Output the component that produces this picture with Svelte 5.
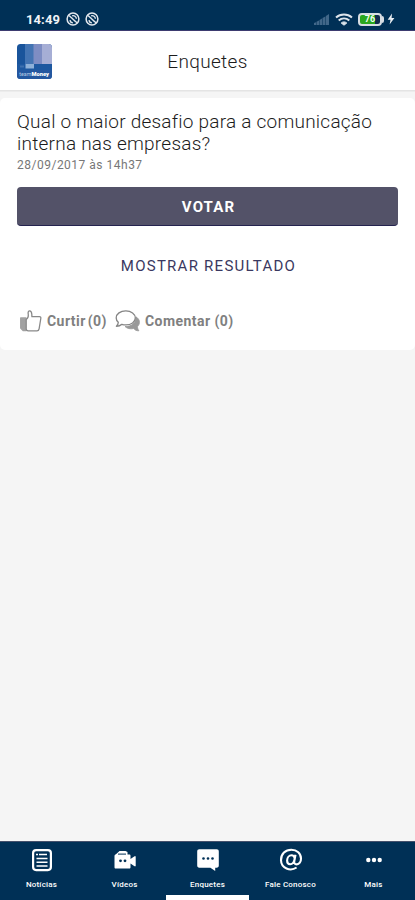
<script lang="ts">
  type Tab = { id: string; label: string };

  const tabs: Tab[] = [
    { id: "news", label: "Notícias" },
    { id: "videos", label: "Vídeos" },
    { id: "polls", label: "Enquetes" },
    { id: "contact", label: "Fale Conosco" },
    { id: "more", label: "Mais" },
  ];

  let active = $state("polls");
  let likes = $state(0);
  let comments = $state(0);
</script>

{#snippet notification()}
  <svg width="14" height="14" viewBox="0 0 14 14" fill="none" stroke="#e3e8ee">
    <circle cx="7" cy="7" r="5.9" stroke-width="1.5" />
    <path d="M3 3.6 11.2 11M4 8.2c.2 1.5 1.3 2.6 2.9 2.7M6.2 3.8c2-.5 4 .6 4.2 3M6 6.3l3.4 3.2" stroke-width="1.4" />
  </svg>
{/snippet}

<div class="screen">
  <div class="status">
    <span class="clock">14:49</span>
    {@render notification()}
    {@render notification()}
    <div class="status-right">
      <svg width="17" height="13" viewBox="0 0 17 13" fill="#416789">
        <path d="M1 12V10l2-.8V12zM3.5 12V8.7l2.5-1.2V12zM6.5 12V7l2.5-1.5V12zM9.5 12V5.1l2.9-1.6V12zM12.9 12V3.1l3.1-2.1v11z" />
      </svg>
      <svg class="wifi" width="18" height="13" viewBox="0 0 18 13" fill="none" stroke="#dce4eb">
        <path d="M1 4.6c4.6-4 11.4-4 16 0" stroke-width="2" />
        <path d="M3.7 7.4c3.1-2.7 7.5-2.7 10.6 0" stroke-width="2" />
        <path d="M6.2 10c1.6-1.5 4-1.5 5.6 0L9 12.2z" fill="#dce4eb" stroke-width="1" />
      </svg>
      <div class="battery"><span>76</span></div>
      <svg class="bolt" width="8" height="12" viewBox="0 0 8 12" fill="#e8edf2">
        <path d="M5 .5.7 6.8h2.8L2.6 11.5 7.4 5H4.6z" />
      </svg>
    </div>
  </div>

  <header>
    <svg class="logo" width="35" height="35" viewBox="0 0 35 35">
      <defs>
        <clipPath id="logo-shape"><rect width="35" height="35" rx="3.5" /></clipPath>
      </defs>
      <g clip-path="url(#logo-shape)">
        <rect width="35" height="35" fill="#19549b" />
        <rect x="8" width="9" height="20" fill="#4374b3" />
        <rect x="16.5" width="9" height="20" fill="#7e8dc3" />
        <rect x="25" width="10" height="20" fill="#a6aed5" />
        <rect y="20" width="35" height="6" fill="#1d58a0" />
        <rect x="8.5" y="20" width="8.5" height="4.5" fill="#8db0d8" />
        <rect x="3" y="21.5" width="4" height="2" fill="#3e70ae" />
        <rect y="26" width="35" height="9" fill="#2457a0" />
        <text x="2.2" y="31.6" font-size="5.2" fill="#b9cee6" textLength="12">team</text>
        <text x="14.5" y="31.8" font-size="5.4" font-weight="900" fill="#fff" textLength="17.5" lengthAdjust="spacingAndGlyphs">Money</text>
      </g>
    </svg>
    <h1>Enquetes</h1>
  </header>

  <main>
    <article class="card">
      <h2>Qual o maior desafio para a comunicação<br />interna nas empresas?</h2>
      <time>28/09/2017 às 14h37</time>
      <button class="btn btn-vote">VOTAR</button>
      <button class="btn btn-result">MOSTRAR RESULTADO</button>
      <div class="actions">
        <button class="action" onclick={() => likes++}>
          <svg width="22" height="22" viewBox="0 0 22 22" fill="none" stroke="#898989" stroke-width="1.3" stroke-linejoin="round">
            <path d="M.7 8h5.2v12.7H3.3L.7 18z" fill="#a2a2a2" stroke="#a2a2a2" />
            <path d="M6.2 9.400c1.5-.8 2.300-2.200 2.100-4.500C8 3 7.900 1 9.500.8c1.900-.1 2.200 2.200 2.300 3.500l.1 2.300h7.500c1.200 0 1.600.8 1.400 1.900l-1.700 10.300c-.3 1.500-.8 2-2.100 2H8.200c-1.300 0-2-.7-2-1.700z" fill="#fff" />
          </svg>
          <span class="like-label">Curtir</span><span class="like-count">({likes})</span>
        </button>
        <button class="action comment">
          <svg width="26" height="22" viewBox="0 0 26 22" fill="none" stroke="#858585" stroke-linejoin="round">
            <path d="M20.8 6.8c3.900 2 4.900 6.500 2 9.300-.6.600-.3 2.800 1.100 4.700-2.300.1-4-.7-5.200-2.300-3.300.8-6.600.1-8.700-2 6.500.2 11.500-3.700 10.800-9.700z" fill="#999" stroke="#999" stroke-width=".8" />
            <path d="M10.800.9c5.400 0 9.500 3 9.500 7s-4.100 7-9.500 7c-1.500 0-2.700-.2-3.900-.6-1.400 1.300-3.100 2-5.500 2 1.200-1.100 1.900-2.500 1.900-4C1.900 11.100 1.200 9.600 1.200 7.900c0-4 4.200-7 9.600-7z" fill="#fff" stroke-width="1.3" />
          </svg>
          <span class="comment-label">Comentar ({comments})</span>
        </button>
      </div>
    </article>
  </main>

  <nav>
    {#each tabs as tab (tab.id)}
      <button class="tab" class:active={active === tab.id} onclick={() => (active = tab.id)}>
        <svg width="24" height="24" viewBox="0 0 24 24" fill="#fff">
          {#if tab.id === "news"}
            <rect x="3.1" y="2.1" width="17.8" height="20" rx="3" fill="none" stroke="#fff" stroke-width="2.2" />
            <path d="M9 6.6h8M6.5 10.5h11M6.5 14.2h11M6.5 18h11M6 6.6h2" fill="none" stroke="#fff" stroke-width="1.5" />
          {:else if tab.id === "videos"}
            <path d="M3.5 5.8 6.5 3h6l2 1v2.5h1.800c.8 0 1.200.5 1.200 1.200V11l4-2.700h1.200v9.900h-1.200l-4-2.700v3.800c0 .8-.4 1.200-1.200 1.200H2.700c-.8 0-1.200-.4-1.200-1.200V8c0-.7.3-1.200 1-1.400z" />
            <path d="M5 6.1h8" stroke="#003056" stroke-width="1" />
            <circle cx="7.5" cy="12.8" r="1.4" fill="#003056" />
            <circle cx="12" cy="12.8" r="1.4" fill="#003056" />
          {:else if tab.id === "polls"}
            <path d="M3.3 1.3h17.400c1.300 0 2.100.8 2.100 2.100v14.200c0 1.300-.8 2.100-2.100 2.100h-1.500V23l-4.800-3.300H3.300c-1.300 0-2.100-.8-2.100-2.100V3.400c0-1.300.8-2.100 2.100-2.100z" />
            <circle cx="7.5" cy="10.5" r="1.3" fill="#003056" />
            <circle cx="12" cy="10.5" r="1.3" fill="#003056" />
            <circle cx="16.5" cy="10.5" r="1.3" fill="#003056" />
          {:else if tab.id === "contact"}
            <path d="M17.6 19.5c-6.300 4.300-15.400.8-15.600-7.200C1.900 5.900 6.500 1.700 12.300 1.700c5.700 0 9.700 3.700 9.700 8.700 0 3.500-1.800 6-4.300 6-2 0-2.800-1.300-2.400-3.300l1.200-6.400M15.700 10.300c-.4-2-1.500-3-3.100-3-2.600 0-4.500 2.400-4.500 5.300 0 2.300 1.200 3.700 3 3.700 2.300 0 4.300-2.600 4.600-6z" fill="none" stroke="#fff" stroke-width="2.1" />
          {:else}
            <circle cx="6.3" cy="12" r="2.2" />
            <circle cx="12" cy="12" r="2.2" />
            <circle cx="17.7" cy="12" r="2.2" />
          {/if}
        </svg>
        <span>{tab.label}</span>
      </button>
    {/each}
  </nav>
</div>

<style>
  :global(body) {
    margin: 0;
  }

  .screen {
    display: flex;
    flex-direction: column;
    height: 900px;
    background: #f5f5f5;
    font-family: Roboto, "Liberation Sans", sans-serif;
  }

  svg {
    display: block;
    flex: none;
  }

  button {
    padding: 0;
    border: none;
    background: none;
    font-family: inherit;
    cursor: pointer;
  }

  .status {
    display: flex;
    align-items: center;
    gap: 5px;
    box-sizing: border-box;
    height: 31px;
    padding: 8px 20px 0 26px;
    background: #003056;
    border-bottom: 1px solid #3d3b70;
  }

  .clock {
    width: 35px;
    color: #f1f4f7;
    font-size: 13px;
    font-weight: 700;
    letter-spacing: 0.1px;
  }

  .status-right {
    display: flex;
    align-items: center;
    margin-left: auto;
  }

  .wifi {
    margin-left: 5px;
  }

  .battery {
    position: relative;
    display: flex;
    align-items: center;
    justify-content: center;
    box-sizing: border-box;
    width: 24px;
    height: 13px;
    margin: 0 5px 0 5px;
    border: 2px solid #d7dde3;
    border-radius: 4px;
    background: linear-gradient(90deg, #29a71e 76%, #102b4e 76%);
  }

  .battery::after {
    content: "";
    position: absolute;
    top: 1px;
    right: -4px;
    width: 2px;
    height: 7px;
    border-radius: 0 2px 2px 0;
    background: #d7dde3;
  }

  .battery span {
    color: #f2fff0;
    font-size: 9px;
    font-weight: 700;
    line-height: 9px;
  }

  header {
    display: grid;
    grid-template-columns: 35px 1fr 35px;
    align-items: center;
    box-sizing: border-box;
    height: 60px;
    padding: 2px 17px 0;
    background: #fff;
    border-bottom: 1px solid #e4e4e4;
  }

  h1 {
    margin: 0;
    color: #1c1c1c;
    font-size: 19px;
    font-weight: 300;
    letter-spacing: 0.35px;
    text-align: center;
  }

  main {
    flex: 1;
    padding-top: 6px;
    border-top: 1px solid #ececec;
  }

  .card {
    display: flex;
    flex-direction: column;
    box-sizing: border-box;
    height: 252px;
    padding: 13px 17px 0;
    border-radius: 5px;
    background: #fff;
  }

  h2 {
    margin: 0;
    color: #1c1c1c;
    font-size: 19px;
    font-weight: 300;
    line-height: 22px;
    letter-spacing: 0.23px;
    white-space: nowrap;
  }

  time {
    margin-top: 3px;
    color: #777;
    font-size: 12px;
    line-height: 14px;
    letter-spacing: 0.5px;
  }

  .btn {
    font-size: 15px;
    letter-spacing: 1.25px;
  }

  .btn-vote {
    height: 39px;
    margin-top: 15px;
    padding: 2px 0 0 2px;
    border-bottom: 1px solid #24234f;
    border-radius: 4px;
    background: #535268;
    color: #fff;
    font-weight: 700;
    letter-spacing: 1.1px;
  }

  .btn-result {
    height: 40px;
    margin-top: 20px;
    padding-left: 2px;
    color: #3a3860;
    font-weight: 400;
  }

  .actions {
    display: flex;
    margin: 24px 0 0 3px;
  }

  .action {
    display: flex;
    align-items: center;
    color: #808080;
    font-size: 14px;
    font-weight: 700;
    letter-spacing: 0.45px;
  }

  .like-label {
    margin-left: 5px;
  }

  .like-count {
    margin-left: 2px;
  }

  .comment {
    margin-left: 8px;
  }

  .comment-label {
    margin-left: 4px;
  }

  nav {
    display: grid;
    grid-template-columns: repeat(5, 1fr);
    box-sizing: border-box;
    height: 59px;
    background: #003056;
    border-top: 1px solid #44506b;
  }

  .tab {
    display: flex;
    flex-direction: column;
    align-items: center;
    box-sizing: border-box;
    padding-top: 6px;
    border-bottom: 5px solid transparent;
    color: #fff;
    font-size: 8px;
    font-weight: 500;
    letter-spacing: 0.2px;
  }

  .tab.active {
    border-bottom-color: #fff;
  }

  .tab span {
    margin-top: 8px;
    line-height: 10px;
  }
</style>
